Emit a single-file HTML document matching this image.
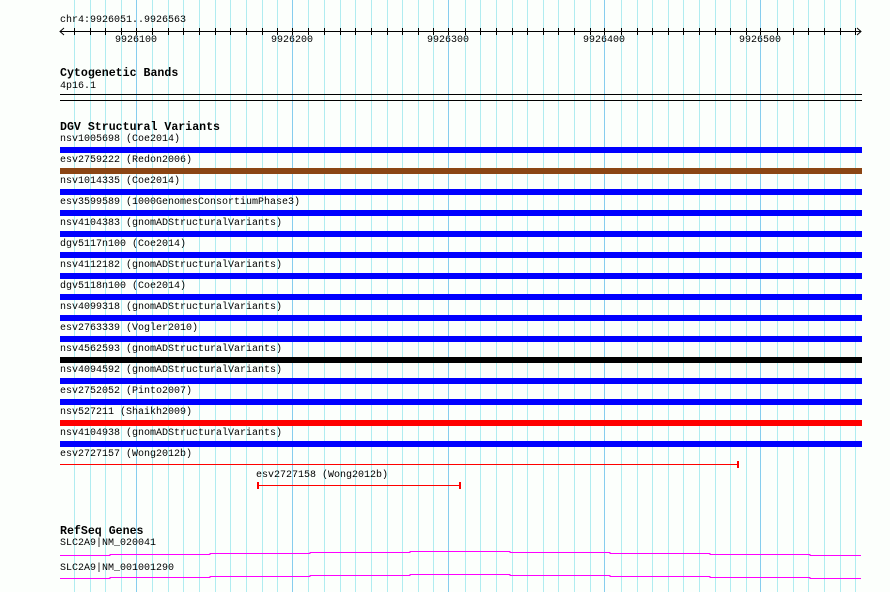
<!DOCTYPE html>
<html><head><meta charset="utf-8"><style>
body{margin:0;width:890px;height:592px;background:#fcfffc;overflow:hidden;position:relative;font-family:"Liberation Mono",monospace;}
.t{position:absolute;font-size:10px;line-height:10px;color:#000;white-space:pre;}
.h{position:absolute;font-size:11.6px;line-height:12px;font-weight:bold;color:#000;white-space:pre;}
svg{position:absolute;left:0;top:0;}
</style></head><body>
<svg width="890" height="592" xmlns="http://www.w3.org/2000/svg">
<path stroke="#b0ecf0" stroke-width="1" fill="none" d="M74.5 0V592M90.5 0V592M105.5 0V592M121.5 0V592M152.5 0V592M168.5 0V592M183.5 0V592M199.5 0V592M215.5 0V592M230.5 0V592M246.5 0V592M262.5 0V592M277.5 0V592M308.5 0V592M324.5 0V592M340.5 0V592M355.5 0V592M371.5 0V592M387.5 0V592M402.5 0V592M418.5 0V592M433.5 0V592M465.5 0V592M480.5 0V592M496.5 0V592M512.5 0V592M527.5 0V592M543.5 0V592M558.5 0V592M574.5 0V592M590.5 0V592M621.5 0V592M637.5 0V592M652.5 0V592M668.5 0V592M683.5 0V592M699.5 0V592M715.5 0V592M730.5 0V592M746.5 0V592M777.5 0V592M793.5 0V592M808.5 0V592M824.5 0V592M840.5 0V592M855.5 0V592"/>
<path stroke="#86cdee" stroke-width="1" fill="none" d="M136.5 0V592M292.5 0V592M448.5 0V592M604.5 0V592M760.5 0V592"/>
<path stroke="#000" stroke-width="1" fill="none" d="M74.5 28V35M90.5 28V35M105.5 28V35M121.5 28V35M136.5 28V35M152.5 28V35M168.5 28V35M183.5 28V35M199.5 28V35M215.5 28V35M230.5 28V35M246.5 28V35M262.5 28V35M277.5 28V35M292.5 28V35M308.5 28V35M324.5 28V35M340.5 28V35M355.5 28V35M371.5 28V35M387.5 28V35M402.5 28V35M418.5 28V35M433.5 28V35M448.5 28V35M465.5 28V35M480.5 28V35M496.5 28V35M512.5 28V35M527.5 28V35M543.5 28V35M558.5 28V35M574.5 28V35M590.5 28V35M604.5 28V35M621.5 28V35M637.5 28V35M652.5 28V35M668.5 28V35M683.5 28V35M699.5 28V35M715.5 28V35M730.5 28V35M746.5 28V35M760.5 28V35M777.5 28V35M793.5 28V35M808.5 28V35M824.5 28V35M840.5 28V35M855.5 28V35"/>
<line x1="60" y1="31.5" x2="861" y2="31.5" stroke="#000"/>
<path d="M64 28 L60 31.5 L64 35" stroke="#000" fill="none"/>
<path d="M857 28 L861 31.5 L857 35" stroke="#000" fill="none"/>
<line x1="60" y1="94.5" x2="862" y2="94.5" stroke="#000"/>
<line x1="60" y1="100.5" x2="862" y2="100.5" stroke="#000"/>
<rect x="60" y="147" width="802" height="6" fill="#0000ff"/>
<rect x="60" y="168" width="802" height="6" fill="#8b4513"/>
<rect x="60" y="189" width="802" height="6" fill="#0000ff"/>
<rect x="60" y="210" width="802" height="6" fill="#0000ff"/>
<rect x="60" y="231" width="802" height="6" fill="#0000ff"/>
<rect x="60" y="252" width="802" height="6" fill="#0000ff"/>
<rect x="60" y="273" width="802" height="6" fill="#0000ff"/>
<rect x="60" y="294" width="802" height="6" fill="#0000ff"/>
<rect x="60" y="315" width="802" height="6" fill="#0000ff"/>
<rect x="60" y="336" width="802" height="6" fill="#0000ff"/>
<rect x="60" y="357" width="802" height="6" fill="#000000"/>
<rect x="60" y="378" width="802" height="6" fill="#0000ff"/>
<rect x="60" y="399" width="802" height="6" fill="#0000ff"/>
<rect x="60" y="420" width="802" height="6" fill="#ff0000"/>
<rect x="60" y="441" width="802" height="6" fill="#0000ff"/>
<line x1="60" y1="464.5" x2="738" y2="464.5" stroke="#ff0000"/>
<rect x="737" y="461" width="2" height="7" fill="#ff0000"/>
<line x1="258" y1="485.5" x2="460" y2="485.5" stroke="#ff0000"/>
<rect x="257" y="482" width="2" height="7" fill="#ff0000"/>
<rect x="459" y="482" width="2" height="7" fill="#ff0000"/>
<path d="M60 555.5H110V554.5H210V553.5H310V552.5H410V551.5H510V552.5H610V553.5H710V554.5H810V555.5H861" stroke="#ff00ff" fill="none"/>
<path d="M60 578.5H110V577.5H210V576.5H310V575.5H410V574.5H510V575.5H610V576.5H710V577.5H810V578.5H861" stroke="#ff00ff" fill="none"/>
</svg>
<div class="t" style="left:60px;top:16px">chr4:9926051..9926563</div>
<div class="t" style="left:115px;top:36px">9926100</div>
<div class="t" style="left:271px;top:36px">9926200</div>
<div class="t" style="left:427px;top:36px">9926300</div>
<div class="t" style="left:583px;top:36px">9926400</div>
<div class="t" style="left:739px;top:36px">9926500</div>
<div class="h" style="left:60px;top:68px">Cytogenetic Bands</div>
<div class="t" style="left:60px;top:82px">4p16.1</div>
<div class="h" style="left:60px;top:122px">DGV Structural Variants</div>
<div class="t" style="left:60px;top:135px">nsv1005698 (Coe2014)</div>
<div class="t" style="left:60px;top:156px">esv2759222 (Redon2006)</div>
<div class="t" style="left:60px;top:177px">nsv1014335 (Coe2014)</div>
<div class="t" style="left:60px;top:198px">esv3599589 (1000GenomesConsortiumPhase3)</div>
<div class="t" style="left:60px;top:219px">nsv4104383 (gnomADStructuralVariants)</div>
<div class="t" style="left:60px;top:240px">dgv5117n100 (Coe2014)</div>
<div class="t" style="left:60px;top:261px">nsv4112182 (gnomADStructuralVariants)</div>
<div class="t" style="left:60px;top:282px">dgv5118n100 (Coe2014)</div>
<div class="t" style="left:60px;top:303px">nsv4099318 (gnomADStructuralVariants)</div>
<div class="t" style="left:60px;top:324px">esv2763339 (Vogler2010)</div>
<div class="t" style="left:60px;top:345px">nsv4562593 (gnomADStructuralVariants)</div>
<div class="t" style="left:60px;top:366px">nsv4094592 (gnomADStructuralVariants)</div>
<div class="t" style="left:60px;top:387px">esv2752052 (Pinto2007)</div>
<div class="t" style="left:60px;top:408px">nsv527211 (Shaikh2009)</div>
<div class="t" style="left:60px;top:429px">nsv4104938 (gnomADStructuralVariants)</div>
<div class="t" style="left:60px;top:450px">esv2727157 (Wong2012b)</div>
<div class="t" style="left:256px;top:471px">esv2727158 (Wong2012b)</div>
<div class="h" style="left:60px;top:526px">RefSeq Genes</div>
<div class="t" style="left:60px;top:539px">SLC2A9|NM_020041</div>
<div class="t" style="left:60px;top:564px">SLC2A9|NM_001001290</div>
</body></html>
